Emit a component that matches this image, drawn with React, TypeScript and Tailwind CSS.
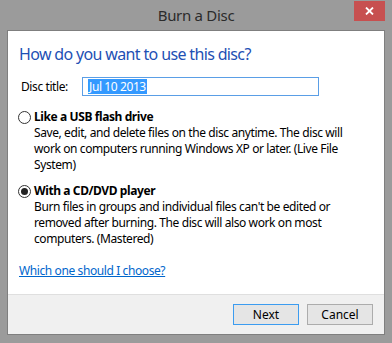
export default function App() {
  return (
    <div
      className="w-[392px] h-[343px] bg-[#9b9b9b] flex flex-col relative"
      style={{ fontFamily: '"Noto Sans", "Segoe UI", sans-serif' }}
    >
      <div className="h-[30px] flex items-center justify-center text-[15px] text-[#2b2b2b] tracking-[-0.3px]">
        Burn a Disc
      </div>
      <button className="absolute left-[354px] top-[1px] w-[31px] h-[20px] bg-[#c75050] flex items-center justify-center">
        <svg width="9" height="8" viewBox="0 0 9 8">
          <path d="M1 0.5 L8 7.5 M8 0.5 L1 7.5" stroke="#fff" strokeWidth="1.8" />
        </svg>
      </button>
      <div className="mx-[7px] h-[305px] border border-[#7f7f7f] flex flex-col">
        <div className="h-[263px] bg-white pl-[11px] pt-[13px] text-[12px] text-black tracking-[-0.4px]">
          <div className="text-[16px] leading-[21px] text-[#1e50b4] tracking-[-0.65px]">How do you want to use this disc?</div>
          <div className="flex items-center mt-[12px] h-[19px]">
            <span className="w-[63px] pl-[2px]">Disc title:</span>
            <div className="w-[237px] h-[19px] border border-[#5a9ee6] flex items-center pl-[5px]">
              <span className="bg-[#3399ff] text-white leading-[15px] px-[1px]">Jul 10 2013</span>
            </div>
          </div>
          <div className="flex mt-[13px]">
            <Radio checked={false} />
            <div className="ml-[3px] leading-[16px]">
              <div className="font-bold">Like a USB flash drive</div>
              <div className="w-[322px]">
                Save, edit, and delete files on the disc anytime. The disc will work on computers running Windows XP or later. (Live File System)
              </div>
            </div>
          </div>
          <div className="flex mt-[10px]">
            <Radio checked={true} />
            <div className="ml-[3px] leading-[16px]">
              <div className="font-bold">With a CD/DVD player</div>
              <div className="w-[322px]">
                Burn files in groups and individual files can't be edited or removed after burning. The disc will also work on most computers. (Mastered)
              </div>
            </div>
          </div>
          <div className="mt-[16px] text-[#0066cc] underline leading-[16px]">Which one should I choose?</div>
        </div>
        <div className="h-[40px] bg-[#f0f0f0] border-t border-[#dfdfdf] flex items-center justify-end gap-[8px] pr-[11px] text-[12px] text-black">
          <button className="w-[66px] h-[21px] bg-[#e5e5e5] border border-[#3c9cf0] flex items-center justify-center">Next</button>
          <button className="w-[66px] h-[21px] bg-[#e5e5e5] border border-[#acacac] flex items-center justify-center">Cancel</button>
        </div>
      </div>
    </div>
  );
}

function Radio({ checked }: { checked: boolean }) {
  return (
    <div className="w-[13px] h-[13px] mt-[2px] ml-[-1px] rounded-full border border-[#333] bg-white flex items-center justify-center shrink-0">
      {checked && <div className="w-[7px] h-[7px] rounded-full bg-[#222]" />}
    </div>
  );
}
